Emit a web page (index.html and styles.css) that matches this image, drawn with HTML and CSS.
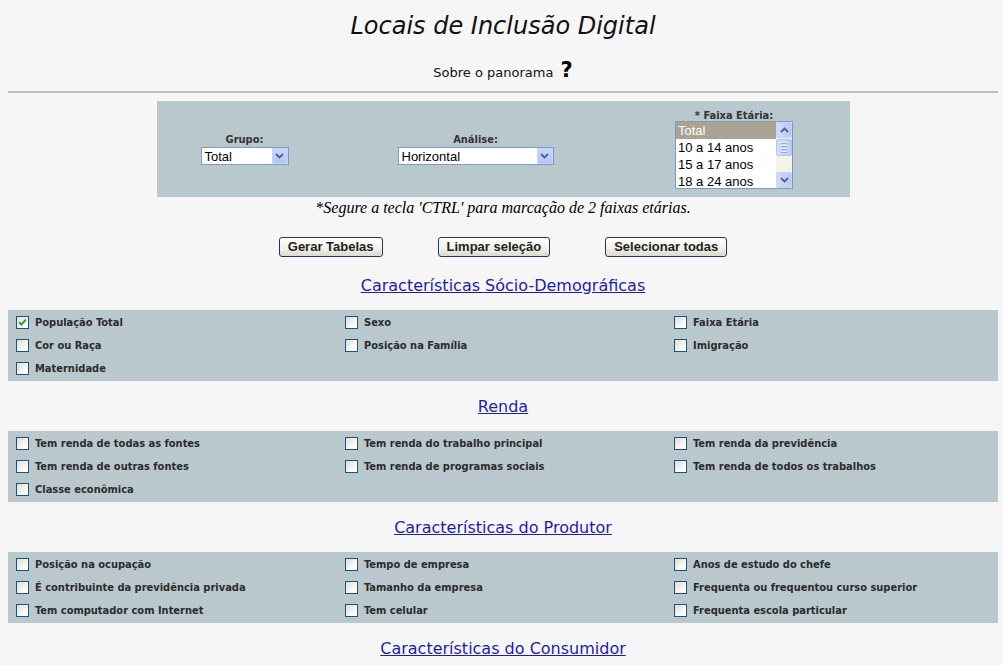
FILE: index.html
```html
<!DOCTYPE html>
<html lang="pt-BR">
<head>
<meta charset="utf-8">
<title>Locais de Inclusão Digital</title>
<link rel="stylesheet" href="styles.css">
</head>
<body>
<div class="page">
  <h1 class="title">Locais de Inclusão Digital</h1>
  <div class="about">Sobre o panorama <span class="help">?</span></div>
  <div class="rule"></div>

  <div class="filters">
    <div class="field col1">
      <div class="flabel">Grupo:</div>
      <div class="select sel-grupo"><span class="sel-text">Total</span><span class="sel-btn"><svg width="9" height="6" viewBox="0 0 9 6"><path d="M1 1 L4.5 4.5 L8 1" fill="none" stroke="#4d6185" stroke-width="1.8"/></svg></span></div>
    </div>
    <div class="field col2">
      <div class="flabel">Análise:</div>
      <div class="select sel-analise"><span class="sel-text">Horizontal</span><span class="sel-btn"><svg width="9" height="6" viewBox="0 0 9 6"><path d="M1 1 L4.5 4.5 L8 1" fill="none" stroke="#4d6185" stroke-width="1.8"/></svg></span></div>
    </div>
    <div class="field col3">
      <div class="flabel">* Faixa Etária:</div>
      <div class="listbox">
        <div class="options">
          <div class="opt selected">Total</div>
          <div class="opt">10 a 14 anos</div>
          <div class="opt">15 a 17 anos</div>
          <div class="opt">18 a 24 anos</div>
        </div>
        <div class="vscroll">
          <span class="sbtn"><svg width="9" height="6" viewBox="0 0 9 6"><path d="M1 5 L4.5 1.5 L8 5" fill="none" stroke="#4d6185" stroke-width="1.8"/></svg></span>
          <span class="thumb"><i></i><i></i><i></i><i></i></span>
          <span class="track"></span>
          <span class="sbtn"><svg width="9" height="6" viewBox="0 0 9 6"><path d="M1 1 L4.5 4.5 L8 1" fill="none" stroke="#4d6185" stroke-width="1.8"/></svg></span>
        </div>
      </div>
    </div>
  </div>

  <p class="note">*Segure a tecla 'CTRL' para marcação de 2 faixas etárias.</p>

  <div class="actions">
    <button class="btn" type="button">Gerar Tabelas</button>
    <button class="btn" type="button">Limpar seleção</button>
    <button class="btn" type="button">Selecionar todas</button>
  </div>

  <div class="section-head"><a href="#">Características Sócio-Demográficas</a></div>
  <div class="group">
    <label class="item"><span class="cb checked"><svg width="9" height="9" viewBox="0 0 9 9"><path d="M1.2 4.2 L3.4 6.6 L7.8 1.6" fill="none" stroke="#21a121" stroke-width="2"/></svg></span>População Total</label>
    <label class="item"><span class="cb"></span>Sexo</label>
    <label class="item"><span class="cb"></span>Faixa Etária</label>
    <label class="item"><span class="cb"></span>Cor ou Raça</label>
    <label class="item"><span class="cb"></span>Posição na Família</label>
    <label class="item"><span class="cb"></span>Imigração</label>
    <label class="item"><span class="cb"></span>Maternidade</label>
  </div>

  <div class="section-head"><a href="#">Renda</a></div>
  <div class="group">
    <label class="item"><span class="cb"></span>Tem renda de todas as fontes</label>
    <label class="item"><span class="cb"></span>Tem renda do trabalho principal</label>
    <label class="item"><span class="cb"></span>Tem renda da previdência</label>
    <label class="item"><span class="cb"></span>Tem renda de outras fontes</label>
    <label class="item"><span class="cb"></span>Tem renda de programas sociais</label>
    <label class="item"><span class="cb"></span>Tem renda de todos os trabalhos</label>
    <label class="item"><span class="cb"></span>Classe econômica</label>
  </div>

  <div class="section-head"><a href="#">Características do Produtor</a></div>
  <div class="group">
    <label class="item"><span class="cb"></span>Posição na ocupação</label>
    <label class="item"><span class="cb"></span>Tempo de empresa</label>
    <label class="item"><span class="cb"></span>Anos de estudo do chefe</label>
    <label class="item"><span class="cb"></span>É contribuinte da previdência privada</label>
    <label class="item"><span class="cb"></span>Tamanho da empresa</label>
    <label class="item"><span class="cb"></span>Frequenta ou frequentou curso superior</label>
    <label class="item"><span class="cb"></span>Tem computador com Internet</label>
    <label class="item"><span class="cb"></span>Tem celular</label>
    <label class="item"><span class="cb"></span>Frequenta escola particular</label>
  </div>

  <div class="section-head"><a href="#">Características do Consumidor</a></div>
</div>
</body>
</html>
```
FILE: styles.css
```css
html, body {
  margin: 0;
  padding: 0;
  background: #f6f6f6;
}
body {
  font-family: "DejaVu Sans", Verdana, sans-serif;
  color: #111;
  overflow: hidden;
}
.page {
  margin: 0 5px 0 8px;
}
.title {
  margin: 0;
  padding-top: 12px;
  font-size: 24px;
  line-height: 28px;
  font-weight: normal;
  font-style: italic;
  text-align: center;
  color: #111;
}
.about {
  margin-top: 17px;
  height: 26px;
  line-height: 26px;
  text-align: center;
  font-size: 13px;
  color: #111;
}
.help {
  font-family: "DejaVu Sans", sans-serif;
  font-weight: bold;
  font-size: 21px;
  vertical-align: 0;
  margin-left: 3px;
  color: #000;
}
.rule {
  margin-top: 8px;
  height: 2px;
  background: #bdbdbd;
}
.filters {
  margin: 8px auto 0;
  width: 693px;
  height: 96px;
  background: #b8c8cd;
  display: grid;
  grid-template-columns: 176px 286px 231px;
  align-items: center;
}
.field {
  display: flex;
  flex-direction: column;
  align-items: center;
}
.flabel {
  font-family: "DejaVu Sans Condensed", "DejaVu Sans", sans-serif;
  font-weight: bold;
  font-size: 11px;
  line-height: 13px;
  color: #333;
  margin-bottom: 1px;
}
.col3 .flabel { margin-bottom: 0; line-height: 11px; }
.select {
  box-sizing: border-box;
  height: 18px;
  background: #fff;
  border: 1px solid #7f9db9;
  display: flex;
  align-items: center;
  justify-content: space-between;
  font-family: "Liberation Sans", Arial, sans-serif;
  font-size: 13px;
  color: #000;
  padding-left: 3px;
}
.sel-grupo { width: 88px; }
.sel-analise { width: 156px; }
.sel-btn {
  box-sizing: border-box;
  width: 16px;
  height: 16px;
  border: 1px solid #c3d3fd;
  background: linear-gradient(#c7d8fb, #b2c7f4);
  border-radius: 1px;
  display: flex;
  align-items: center;
  justify-content: center;
}
.listbox {
  box-sizing: border-box;
  width: 118px;
  height: 68px;
  border: 1px solid #7f9db9;
  background: #fff;
  display: flex;
  font-family: "Liberation Sans", Arial, sans-serif;
  font-size: 13px;
}
.options {
  flex: 1;
  padding-top: 0;
}
.opt {
  height: 17px;
  line-height: 17px;
  padding-left: 2px;
  color: #000;
}
.opt.selected {
  background: #aaa393;
  color: #fff;
}
.vscroll {
  width: 16px;
  display: flex;
  flex-direction: column;
  background: #f4f2ea;
}
.sbtn {
  box-sizing: border-box;
  height: 16px;
  border: 1px solid #c3d3fd;
  background: linear-gradient(90deg, #cfdcfb, #b8cbf5);
  border-radius: 2px;
  display: flex;
  align-items: center;
  justify-content: center;
}
.thumb {
  box-sizing: border-box;
  margin-top: 1px;
  height: 17px;
  border: 1px solid #b4c6f4;
  background: linear-gradient(90deg, #d2defc, #bccef7);
  border-radius: 2px;
  display: flex;
  flex-direction: column;
  align-items: center;
  justify-content: center;
  gap: 1px;
}
.thumb i {
  display: block;
  width: 6px;
  height: 1px;
  background: #eef3fe;
  border-bottom: 1px solid #8faae6;
}
.track { flex: 1; }
.note {
  margin: 2px 0 0;
  height: 18px;
  line-height: 18px;
  text-align: center;
  font-family: "Liberation Serif", "Times New Roman", serif;
  font-style: italic;
  font-size: 16px;
  color: #000;
}
.actions {
  margin-top: 20px;
  display: flex;
  justify-content: center;
  gap: 55px;
}
.btn {
  box-sizing: border-box;
  height: 20px;
  padding: 0 8px;
  border: 1px solid #1b3a5a;
  border-radius: 3px;
  background: linear-gradient(#ffffff, #f1f0ea 60%, #dcd9cc);
  font-family: "Liberation Sans", Arial, sans-serif;
  font-weight: bold;
  font-size: 13px;
  color: #222;
  line-height: 18px;
}
.section-head {
  height: 50px;
  display: flex;
  align-items: center;
  justify-content: center;
  font-size: 16px;
}
.actions + .section-head { margin-top: 3px; }
.section-head a {
  color: #1d1daa;
  text-decoration: underline;
}
.group {
  background: #b8c8cd;
  padding: 1px 0;
  display: grid;
  grid-template-columns: 329px 329px 1fr;
}
.item {
  height: 23px;
  display: flex;
  align-items: center;
  padding-left: 8px;
  font-family: "DejaVu Sans Condensed", "DejaVu Sans", sans-serif;
  font-weight: bold;
  font-size: 11px;
  color: #2b2b2b;
}
.cb {
  box-sizing: border-box;
  width: 13px;
  height: 13px;
  margin-right: 6px;
  border: 1px solid #1c5180;
  background: linear-gradient(135deg, #dedbd2, #fbfbf8 70%, #ffffff);
  display: flex;
  align-items: center;
  justify-content: center;
}
```
